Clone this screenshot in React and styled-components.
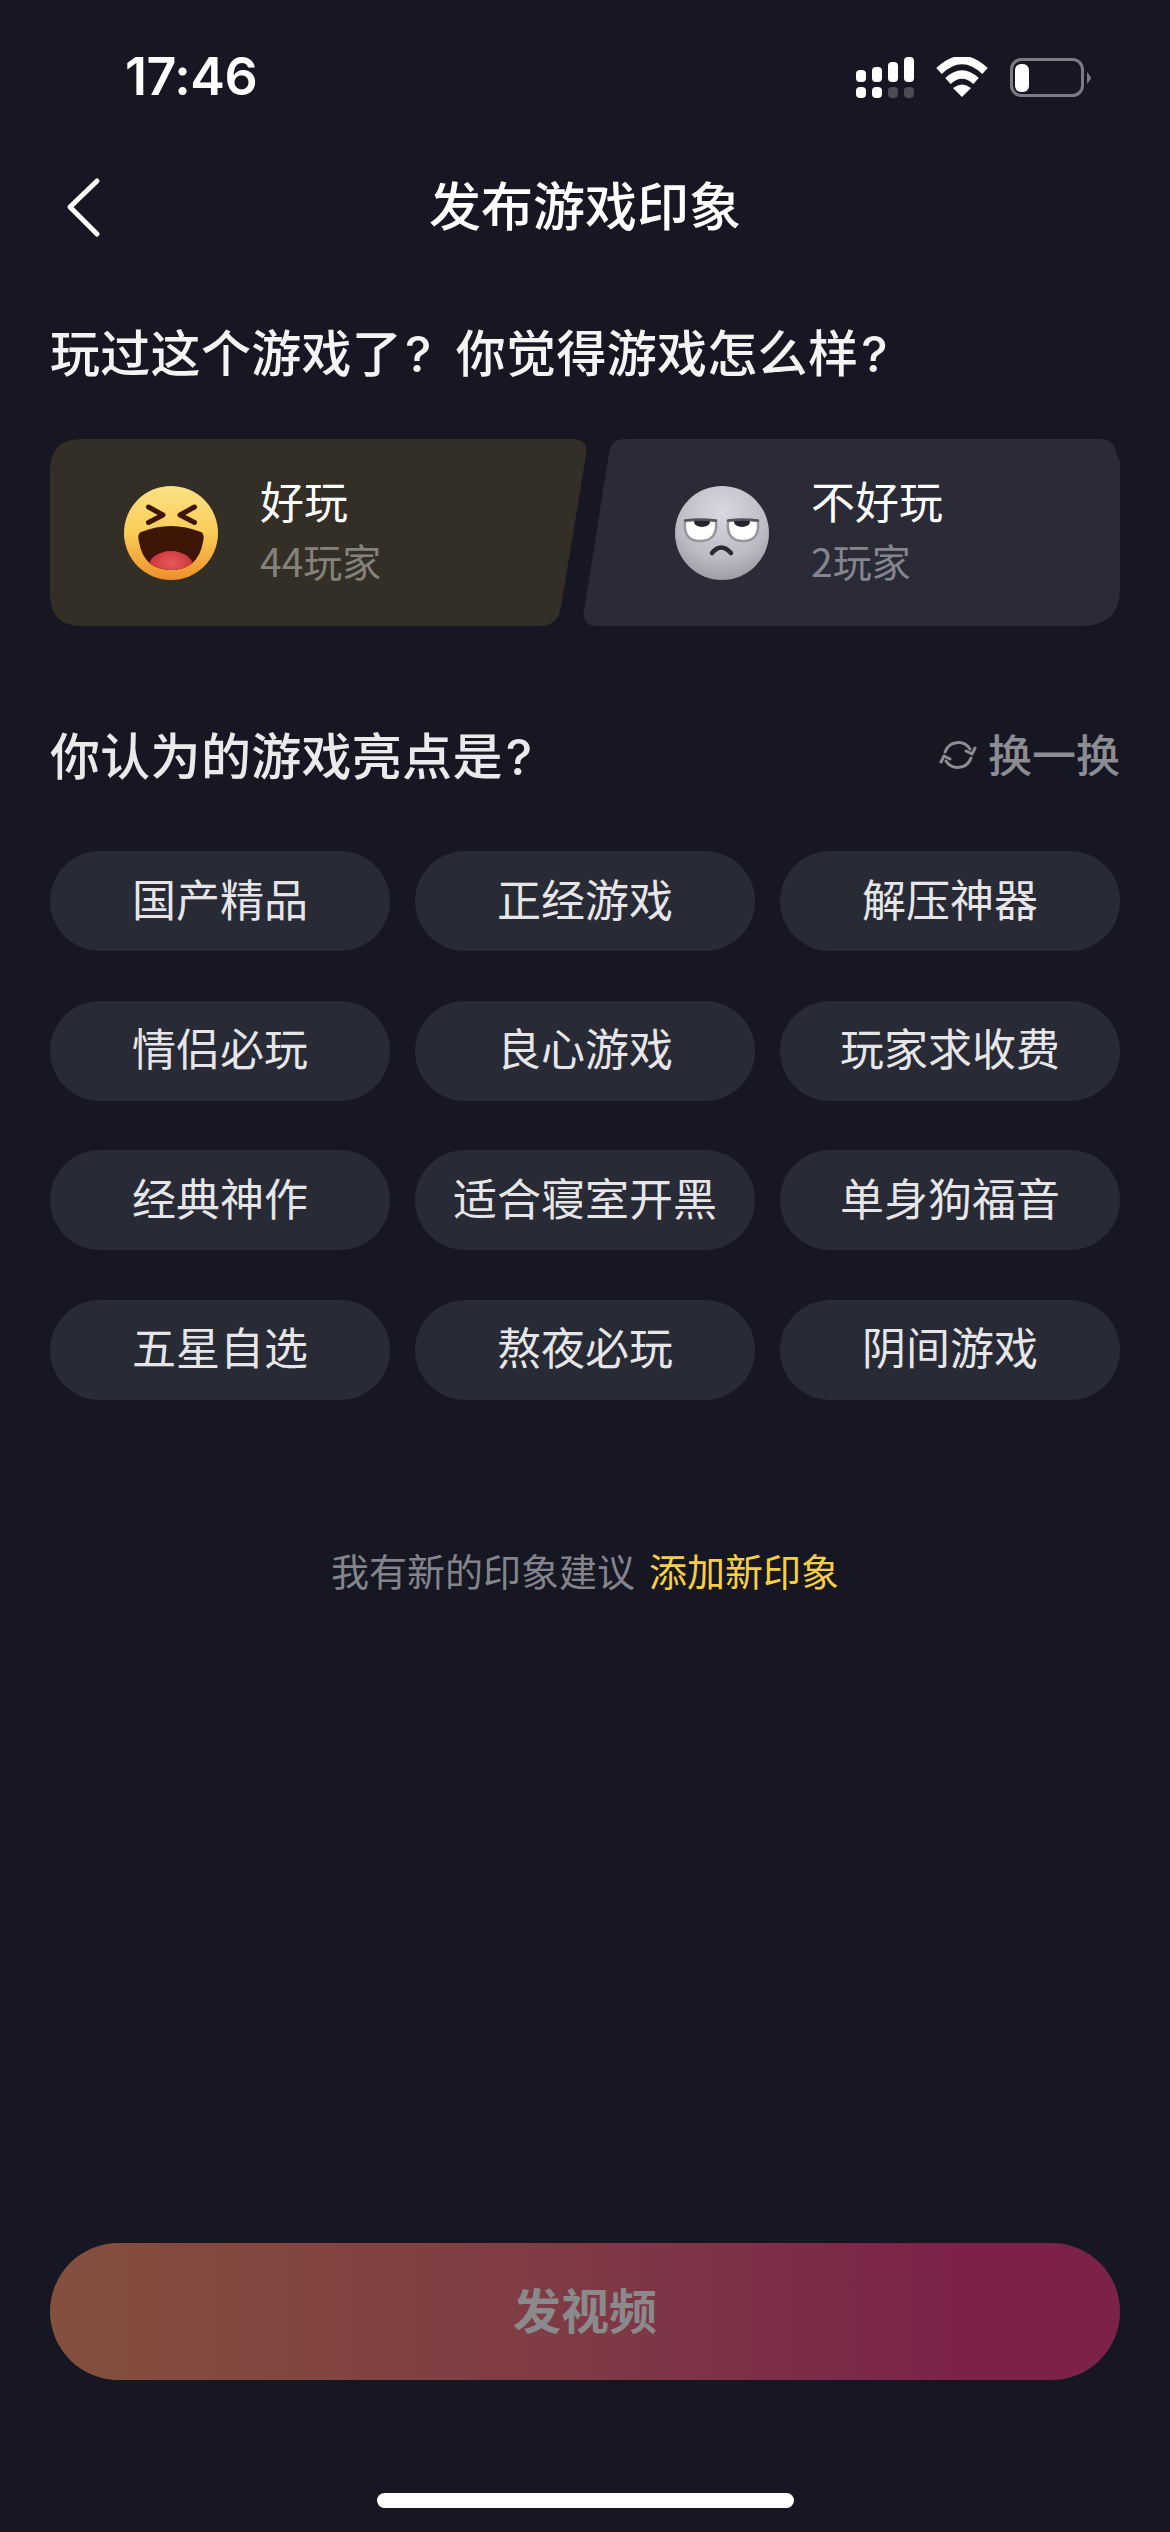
import React from 'react';
import styled, { createGlobalStyle } from 'styled-components';

const GlobalStyle = createGlobalStyle`
    html, body {
        margin: 0;
        padding: 0;
        background: #161722;
    }
    * { box-sizing: border-box; }
`;

const Page = styled.div`
    width: 1170px;
    height: 2532px;
    display: flex;
    flex-direction: column;
    background: #161722;
    color: #fff;
    font-family: "Noto Sans CJK SC", "Noto Sans", sans-serif;
    overflow: hidden;
`;

const StatusBar = styled.div`
    height: 157px;
    flex: none;
    display: flex;
    justify-content: space-between;
    align-items: flex-start;
    padding: 47px 78px 0 125px;
`;

const Time = styled.div`
    font-family: Inter, "Liberation Sans", sans-serif;
    font-size: 52px;
    line-height: 60px;
    font-weight: 600;
    letter-spacing: -0.5px;
`;

const StatusIcons = styled.svg`
    display: block;
    margin-top: 10px;
`;

const Nav = styled.div`
    height: 100px;
    flex: none;
    display: flex;
    align-items: center;
    justify-content: center;
    padding-bottom: 6px;
    position: relative;
`;

const BackIcon = styled.svg`
    position: absolute;
    left: 62px;
    top: 18px;
`;

const NavTitle = styled.h1`
    margin: 0;
    font-size: 52px;
    line-height: 70px;
    font-weight: 500;
`;

const Question = styled.h2`
    margin: 58px 0 0 50px;
    font-size: 50px;
    line-height: 70px;
    font-weight: 500;
    letter-spacing: 0.3px;
    color: #f4f4f5;
`;

const QMark = styled.span`
    font-family: Inter, "Liberation Sans", sans-serif;
    font-weight: 500;
    line-height: 1;
    margin-left: 3px;
    margin-right: ${({spaced}) => spaced ? '24px' : '0'};
`;

const VoteRow = styled.div`
    display: flex;
    margin: 54px 50px 0;
`;

const VoteCard = styled.div`
    width: 537px;
    height: 187px;
    flex: none;
    display: flex;
    align-items: center;
    gap: 42px;
    padding-left: ${({good}) => good ? '74px' : '92px'};
    margin-left: ${({good}) => good ? '0' : '-4px'};
    background: ${({good}) => good ? '#332f27' : '#2a2b36'};
    clip-path: ${({good}) => good
        ? `path('M32 0 L522 0 Q539 0 536 16 L511 168 Q508 187 490 187 L32 187 Q0 187 0 155 L0 32 Q0 0 32 0 Z')`
        : `path('M42 0 L518 0 Q531 0 533 14 L537 22 L537 150 Q537 187 497 187 L14 187 Q-1 187 1 172 L26 14 Q28 0 42 0 Z')`};
`;

const VoteText = styled.div`
    display: flex;
    flex-direction: column;
    padding-bottom: 6px;
`;

const VoteName = styled.div`
    font-size: 44px;
    line-height: 60px;
    color: #fff;
`;

const VoteCount = styled.div`
    font-size: 39px;
    line-height: 60px;
    color: ${({good}) => good ? '#85827c' : '#858590'};
`;

const SectionHeader = styled.div`
    display: flex;
    justify-content: space-between;
    align-items: center;
    height: 70px;
    padding-bottom: 6px;
    margin: 95px 50px 0;
`;

const SectionTitle = styled.h2`
    margin: 0;
    font-size: 50px;
    line-height: 64px;
    font-weight: 500;
    letter-spacing: 0.3px;
    color: #eaeaec;
`;

const SwapButton = styled.div`
    display: flex;
    align-items: center;
    gap: 11px;
    font-size: 44px;
    line-height: 60px;
    font-weight: 500;
    color: #8c8c93;
`;

const SwapGlyph = styled.svg`
    display: block;
    margin-top: 4px;
`;

const TagGrid = styled.div`
    display: grid;
    grid-template-columns: repeat(3, 340px);
    column-gap: 25px;
    row-gap: 49.5px;
    margin: 60px 50px 0;
`;

const Tag = styled.div`
    height: 100px;
    border-radius: 50px;
    padding-bottom: 7px;
    background: #282a35;
    display: flex;
    align-items: center;
    justify-content: center;
    font-size: 44px;
    color: #e6e6e8;
`;

const Hint = styled.div`
    margin-top: 140px;
    text-align: center;
    font-size: 38px;
    line-height: 60px;
    color: #84848c;
`;

const HintLink = styled.span`
    margin-left: 14px;
    color: #f6cf47;
`;

const Footer = styled.div`
    margin-top: auto;
    display: flex;
    flex-direction: column;
    align-items: center;
    padding: 0 50px 24px;
`;

const PublishButton = styled.div`
    width: 100%;
    height: 137px;
    border-radius: 69px;
    padding-bottom: 7px;
    background: linear-gradient(90deg, #84503e 0%, #7f3a45 50%, #7c2249 85%);
    display: flex;
    align-items: center;
    justify-content: center;
    font-size: 48px;
    font-weight: 700;
    color: #8a8a8c;
`;

const HomeBar = styled.div`
    width: 417px;
    height: 15px;
    margin-top: 113px;
    border-radius: 8px;
    background: #fff;
`;

const TAGS = [
    '国产精品', '正经游戏', '解压神器',
    '情侣必玩', '良心游戏', '玩家求收费',
    '经典神作', '适合寝室开黑', '单身狗福音',
    '五星自选', '熬夜必玩', '阴间游戏',
];

const Status = () => (
    <StatusIcons width="236" height="44" viewBox="856 57 236 44">
        <g fill="#fff">
            <rect x="856" y="70" width="10" height="12" rx="4" />
            <rect x="872" y="67" width="10" height="15" rx="4" />
            <rect x="888" y="62" width="10" height="20" rx="4" />
            <rect x="904" y="57" width="10" height="25" rx="4" />
            <rect x="856" y="87" width="10" height="11" rx="4" />
            <rect x="872" y="87" width="10" height="11" rx="4" />
        </g>
        <rect x="888" y="87" width="10" height="11" rx="4" fill="#4c4c55" />
        <rect x="904" y="87" width="10" height="11" rx="4" fill="#4c4c55" />
        <g fill="none" stroke="#fff" strokeWidth="8">
            <path d="M939 71 Q962 49 985 71" />
            <path d="M948 81 Q962 68 976 81" />
        </g>
        <path d="M953 88 Q962 81 971 88 L962 97 Z" fill="#fff" />
        <rect x="1011.5" y="59.5" width="71" height="36" rx="10" fill="none" stroke="#7b7b85" strokeWidth="3" />
        <rect x="1015" y="64" width="14" height="28" rx="6" fill="#fff" />
        <path d="M1087 72 Q1091 77 1091 78 Q1091 79 1087 84 Z" fill="#7b7b85" />
    </StatusIcons>
);

const LaughFace = () => (
    <svg width="94" height="94" viewBox="0 0 94 94">
        <defs>
            <linearGradient id="laughSkin" x1="0" y1="0" x2="0" y2="1">
                <stop offset="0" stopColor="#fbe283" />
                <stop offset="0.5" stopColor="#f9cd58" />
                <stop offset="1" stopColor="#ee8f2a" />
            </linearGradient>
            <radialGradient id="laughTongue" cx="0.5" cy="0.4" r="0.6">
                <stop offset="0" stopColor="#e55a5c" />
                <stop offset="1" stopColor="#c92d33" />
            </radialGradient>
            <clipPath id="laughMouth">
                <path d="M17 46 Q47 34 77 46 Q81 48 79 56 Q74 84 47 84 Q20 84 15 56 Q13 48 17 46 Z" />
            </clipPath>
        </defs>
        <circle cx="47" cy="47" r="47" fill="url(#laughSkin)" />
        <path d="M24.5 21 L39 29 L24.5 36.5" fill="none" stroke="#3f1508" strokeWidth="5" strokeLinecap="round" strokeLinejoin="round" />
        <path d="M70.5 21 L56 29 L70.5 36.5" fill="none" stroke="#3f1508" strokeWidth="5" strokeLinecap="round" strokeLinejoin="round" />
        <g clipPath="url(#laughMouth)">
            <rect x="10" y="30" width="74" height="56" fill="#3f1508" />
            <ellipse cx="47" cy="80" rx="22" ry="15" fill="url(#laughTongue)" />
        </g>
    </svg>
);

const RollFace = () => (
    <svg width="94" height="94" viewBox="0 0 94 94">
        <defs>
            <radialGradient id="rollSkin" cx="0.5" cy="0.28" r="0.8">
                <stop offset="0" stopColor="#d8d8df" />
                <stop offset="0.6" stopColor="#bcbcc5" />
                <stop offset="1" stopColor="#94949e" />
            </radialGradient>
            <clipPath id="rollEyeL"><path d="M10 35 Q25 33 41 35 Q43 55 25 55 Q8 55 10 35 Z" /></clipPath>
            <clipPath id="rollEyeR"><path d="M53 35 Q68 33 83 35 Q85 55 68 55 Q51 55 53 35 Z" /></clipPath>
        </defs>
        <circle cx="47" cy="47" r="47" fill="url(#rollSkin)" />
        <path d="M10 35 Q25 33 41 35 Q43 55 25 55 Q8 55 10 35 Z" fill="#fff" stroke="#96969b" strokeWidth="2.5" />
        <path d="M53 35 Q68 33 83 35 Q85 55 68 55 Q51 55 53 35 Z" fill="#fff" stroke="#96969b" strokeWidth="2.5" />
        <g clipPath="url(#rollEyeL)"><ellipse cx="27" cy="36" rx="8" ry="5" fill="#24242c" /></g>
        <g clipPath="url(#rollEyeR)"><ellipse cx="67" cy="36" rx="8" ry="5" fill="#24242c" /></g>
        <path d="M10 34.5 Q25 32.5 41 34.5" fill="none" stroke="#55555d" strokeWidth="2.5" strokeLinecap="round" />
        <path d="M53 34.5 Q68 32.5 83 34.5" fill="none" stroke="#55555d" strokeWidth="2.5" strokeLinecap="round" />
        <path d="M37 67 Q46 56 56 67" fill="none" stroke="#2a2a32" strokeWidth="4.5" strokeLinecap="round" />
    </svg>
);

const SwapIcon = () => (
    <SwapGlyph width="38" height="34" viewBox="0 0 38 34" fill="none" stroke="#8c8c93" strokeWidth="3" strokeLinecap="round" strokeLinejoin="round">
        <path d="M6 14 A14 14 0 0 1 31 11" />
        <path d="M32 20 A14 14 0 0 1 7 23" />
        <path d="M27 13 L33 16 L36 10" />
        <path d="M11 21 L5 18 L2 24" />
    </SwapGlyph>
);

const App = () => (
    <Page>
        <GlobalStyle />
        <StatusBar>
            <Time>17:46</Time>
            <Status />
        </StatusBar>
        <Nav>
            <BackIcon width="42" height="64" viewBox="0 0 42 64" fill="none" stroke="#fff" strokeWidth="5" strokeLinecap="round" strokeLinejoin="round">
                <path d="M35 6 L8 32 L35 59" />
            </BackIcon>
            <NavTitle>发布游戏印象</NavTitle>
        </Nav>
        <Question>玩过这个游戏了<QMark spaced>?</QMark>你觉得游戏怎么样<QMark>?</QMark></Question>
        <VoteRow>
            <VoteCard good>
                <LaughFace />
                <VoteText>
                    <VoteName>好玩</VoteName>
                    <VoteCount good>44玩家</VoteCount>
                </VoteText>
            </VoteCard>
            <VoteCard>
                <RollFace />
                <VoteText>
                    <VoteName>不好玩</VoteName>
                    <VoteCount>2玩家</VoteCount>
                </VoteText>
            </VoteCard>
        </VoteRow>
        <SectionHeader>
            <SectionTitle>你认为的游戏亮点是<QMark>?</QMark></SectionTitle>
            <SwapButton>
                <SwapIcon />
                换一换
            </SwapButton>
        </SectionHeader>
        <TagGrid>
            {TAGS.map((tag) => <Tag key={tag}>{tag}</Tag>)}
        </TagGrid>
        <Hint>
            我有新的印象建议
            <HintLink>添加新印象</HintLink>
        </Hint>
        <Footer>
            <PublishButton>发视频</PublishButton>
            <HomeBar />
        </Footer>
    </Page>
);

export default App;
